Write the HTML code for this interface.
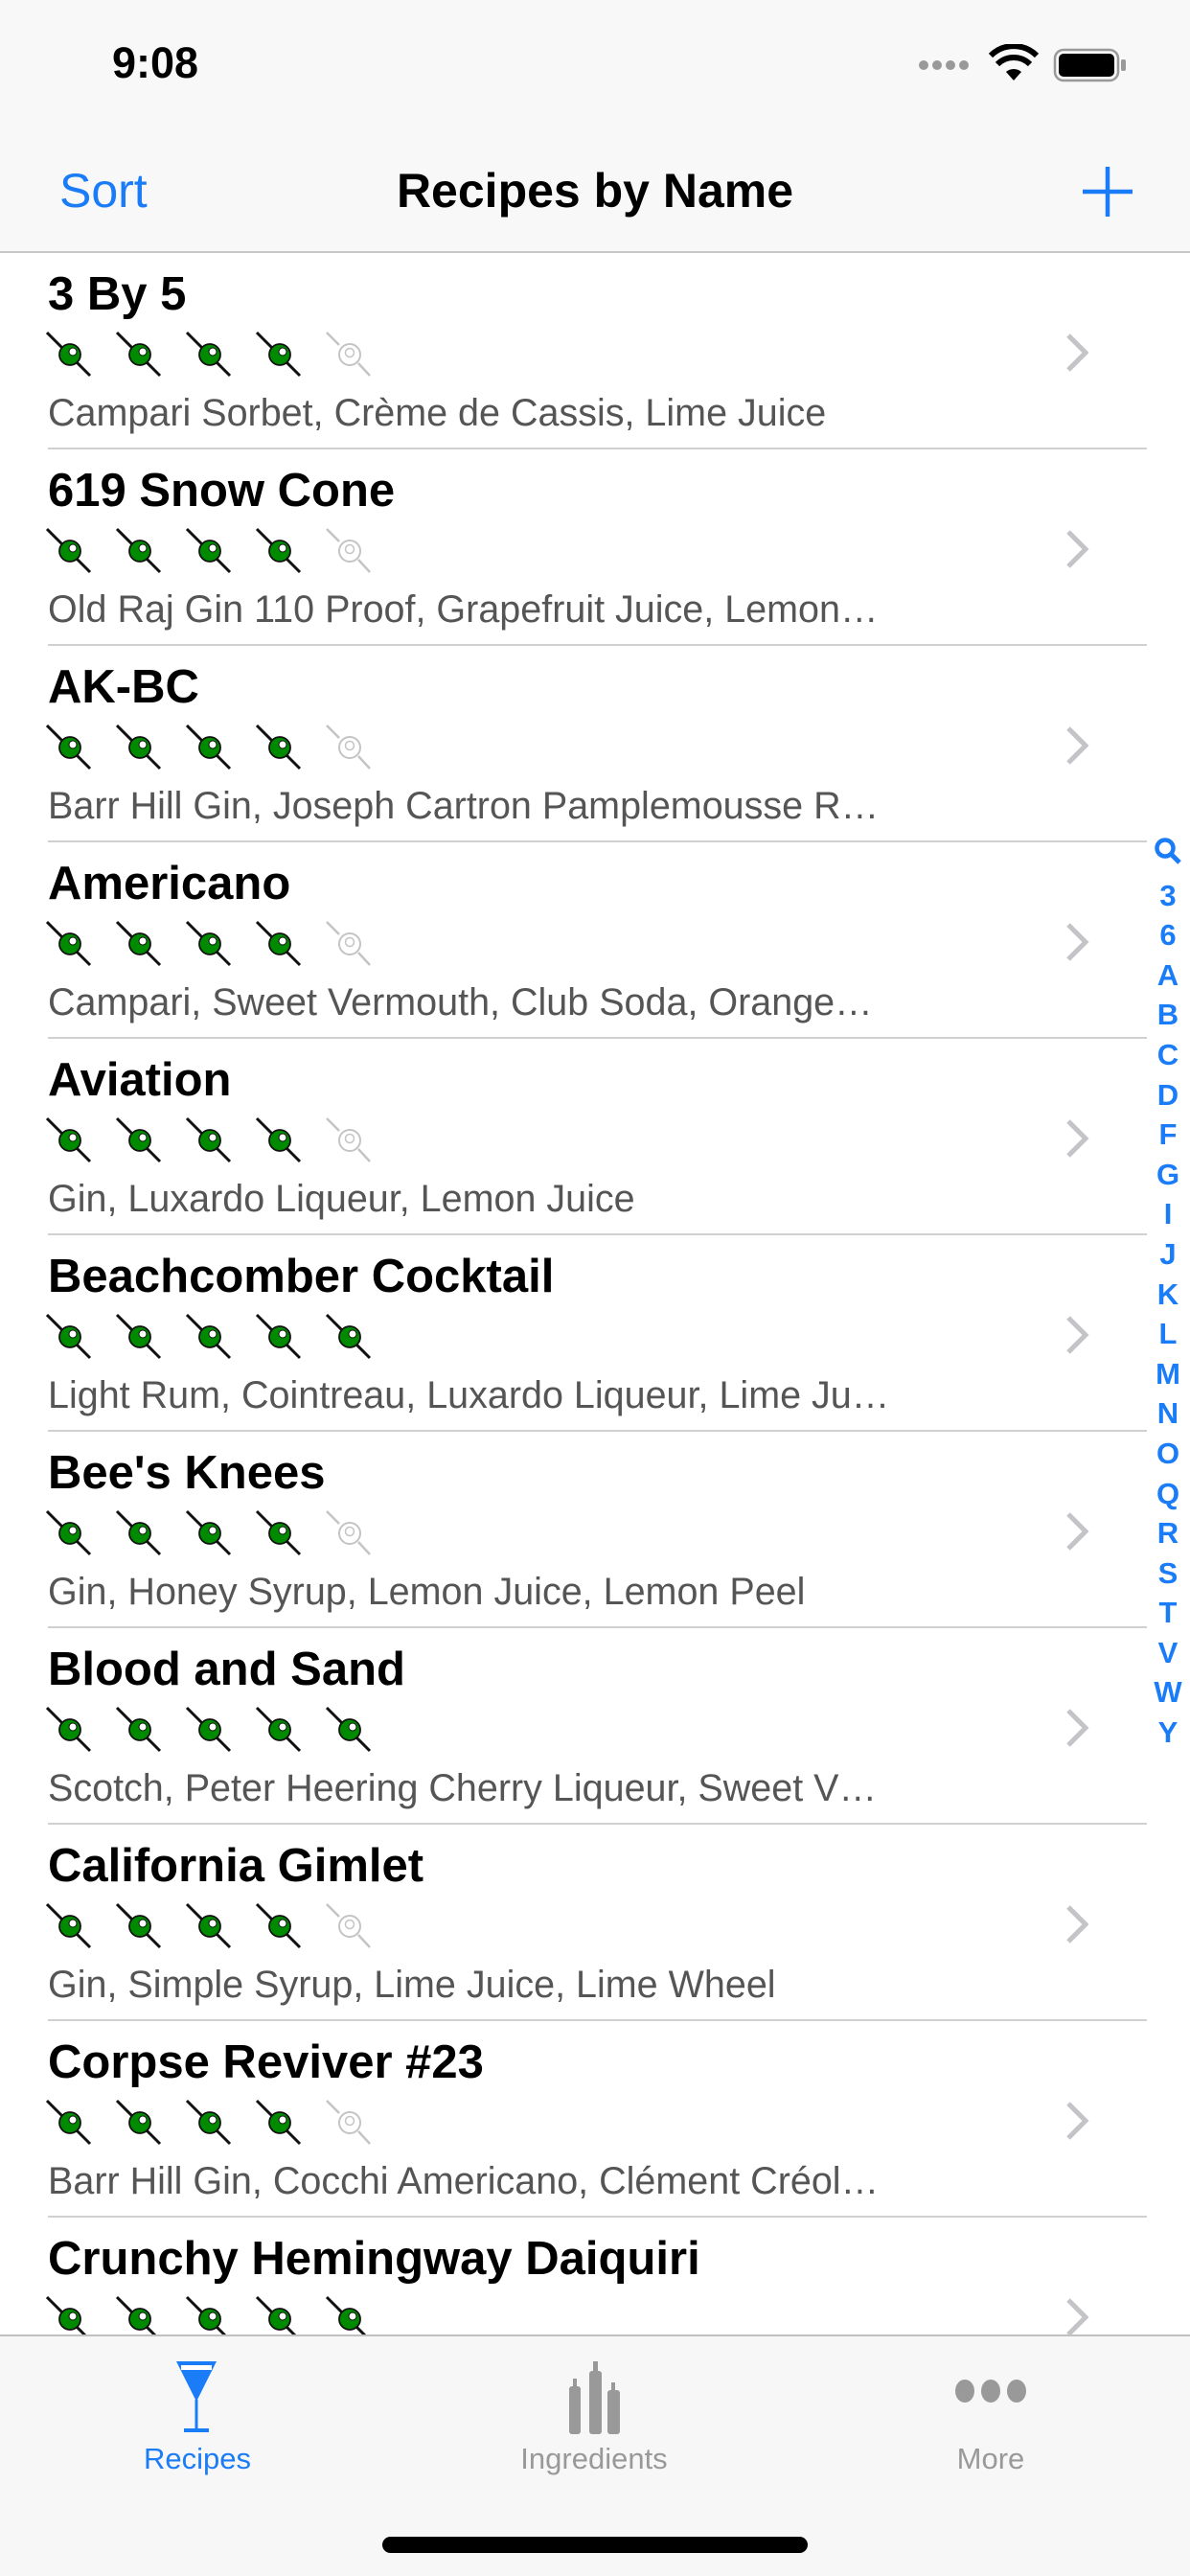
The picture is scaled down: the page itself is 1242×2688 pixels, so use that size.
<!DOCTYPE html>
<html><head><meta charset="utf-8"><style>
*{margin:0;padding:0;box-sizing:border-box}
body{width:1242px;height:2688px;position:relative;background:#fff;font-family:"Liberation Sans",Arial,sans-serif;overflow:hidden}
.abs{position:absolute}
.top{left:0;top:0;width:1242px;height:264px;background:#f8f8f8;border-bottom:2px solid #c8c8c8}
.row{position:absolute;left:0;width:1242px;height:205px}
.t{position:absolute;left:50px;top:15px;font-size:49px;font-weight:bold;color:#000;white-space:nowrap}
.s{position:absolute;left:50px;top:145px;font-size:39.5px;color:#555;white-space:nowrap}
.ic{position:absolute;left:48px;top:80px}
.sep{position:absolute;left:50px;right:45px;bottom:0;height:2px;background:#d0d0d0}
.chev{position:absolute;left:1110px;top:82px}
.idx{position:absolute;left:1198px;width:42px;text-align:center;color:#1a7cf7;font-weight:bold;font-size:31px;line-height:41.6px;top:872px}
.tab{position:absolute;left:0;top:2436px;width:1242px;height:252px;background:#f7f7f7;border-top:2px solid #c0c0c0}
.tl{position:absolute;top:110px;font-size:31px;text-align:center;width:300px}
</style></head><body>
<svg width="0" height="0" style="position:absolute">
<defs>
<g id="g"><line x1="1" y1="3" x2="46" y2="48" stroke="#111" stroke-width="3"/><circle cx="25" cy="26" r="11" fill="#008a00" stroke="#111" stroke-width="1.8"/><circle cx="28" cy="23" r="4" fill="#fff" stroke="#111" stroke-width="1"/></g>
<g id="w"><line x1="1" y1="3" x2="14" y2="16" stroke="#c4c4c4" stroke-width="2.5"/><line x1="34" y1="35" x2="46" y2="48" stroke="#c4c4c4" stroke-width="2.5"/><circle cx="25" cy="26" r="11" fill="#fff" stroke="#c4c4c4" stroke-width="2"/><circle cx="25" cy="24" r="4.5" fill="#fff" stroke="#c4c4c4" stroke-width="1.5"/></g>
</defs></svg>
<div class="abs top"></div>
<div class="abs" style="left:117px;top:40px;font-size:45px;font-weight:bold">9:08</div>
<svg class="abs" style="left:958px;top:60px" width="60" height="16"><g fill="#999"><circle cx="6" cy="8" r="5"/><circle cx="20" cy="8" r="5"/><circle cx="34" cy="8" r="5"/><circle cx="48" cy="8" r="5"/></g></svg>
<svg class="abs" style="left:1032px;top:46px" width="52" height="40" viewBox="0 0 52 40"><path d="M26 38 L18 29 A12 12 0 0 1 34 29 Z" fill="#000"/><path d="M9 21 A24 24 0 0 1 43 21" stroke="#000" stroke-width="6" fill="none"/><path d="M2 12 A34 34 0 0 1 50 12" stroke="#000" stroke-width="6" fill="none"/></svg>
<svg class="abs" style="left:1099px;top:50px" width="78" height="36"><rect x="2" y="2" width="66" height="32" rx="9" fill="none" stroke="#999" stroke-width="2.5"/><rect x="6" y="6" width="58" height="24" rx="5" fill="#000"/><rect x="71" y="12" width="5" height="12" rx="2" fill="#999"/></svg>
<div class="abs" style="left:62px;top:170px;font-size:50px;color:#1a7cf7">Sort</div>
<div class="abs" style="left:0;width:1242px;text-align:center;top:170px;font-size:50px;font-weight:bold">Recipes by Name</div>
<svg class="abs" style="left:1128px;top:172px" width="56" height="56"><path d="M28 2V54M2 28H54" stroke="#1a7cf7" stroke-width="4.5"/></svg>

<div class="row" style="top:264px"><div class="t">3 By 5</div><svg class="ic" width="340" height="52"><use href="#g"/><use href="#g" x="73"/><use href="#g" x="146"/><use href="#g" x="219"/><use href="#w" x="292"/></svg><div class="s">Campari Sorbet, Crème de Cassis, Lime Juice</div><svg class="chev" width="30" height="44"><path d="M5 4L23 22L5 40" stroke="#c4c4c8" stroke-width="5" fill="none"/></svg><div class="sep"></div></div>
<div class="row" style="top:469px"><div class="t">619 Snow Cone</div><svg class="ic" width="340" height="52"><use href="#g"/><use href="#g" x="73"/><use href="#g" x="146"/><use href="#g" x="219"/><use href="#w" x="292"/></svg><div class="s">Old Raj Gin 110 Proof, Grapefruit Juice, Lemon…</div><svg class="chev" width="30" height="44"><path d="M5 4L23 22L5 40" stroke="#c4c4c8" stroke-width="5" fill="none"/></svg><div class="sep"></div></div>
<div class="row" style="top:674px"><div class="t">AK-BC</div><svg class="ic" width="340" height="52"><use href="#g"/><use href="#g" x="73"/><use href="#g" x="146"/><use href="#g" x="219"/><use href="#w" x="292"/></svg><div class="s">Barr Hill Gin, Joseph Cartron Pamplemousse R…</div><svg class="chev" width="30" height="44"><path d="M5 4L23 22L5 40" stroke="#c4c4c8" stroke-width="5" fill="none"/></svg><div class="sep"></div></div>
<div class="row" style="top:879px"><div class="t">Americano</div><svg class="ic" width="340" height="52"><use href="#g"/><use href="#g" x="73"/><use href="#g" x="146"/><use href="#g" x="219"/><use href="#w" x="292"/></svg><div class="s">Campari, Sweet Vermouth, Club Soda, Orange…</div><svg class="chev" width="30" height="44"><path d="M5 4L23 22L5 40" stroke="#c4c4c8" stroke-width="5" fill="none"/></svg><div class="sep"></div></div>
<div class="row" style="top:1084px"><div class="t">Aviation</div><svg class="ic" width="340" height="52"><use href="#g"/><use href="#g" x="73"/><use href="#g" x="146"/><use href="#g" x="219"/><use href="#w" x="292"/></svg><div class="s">Gin, Luxardo Liqueur, Lemon Juice</div><svg class="chev" width="30" height="44"><path d="M5 4L23 22L5 40" stroke="#c4c4c8" stroke-width="5" fill="none"/></svg><div class="sep"></div></div>
<div class="row" style="top:1289px"><div class="t">Beachcomber Cocktail</div><svg class="ic" width="340" height="52"><use href="#g"/><use href="#g" x="73"/><use href="#g" x="146"/><use href="#g" x="219"/><use href="#g" x="292"/></svg><div class="s">Light Rum, Cointreau, Luxardo Liqueur, Lime Ju…</div><svg class="chev" width="30" height="44"><path d="M5 4L23 22L5 40" stroke="#c4c4c8" stroke-width="5" fill="none"/></svg><div class="sep"></div></div>
<div class="row" style="top:1494px"><div class="t">Bee's Knees</div><svg class="ic" width="340" height="52"><use href="#g"/><use href="#g" x="73"/><use href="#g" x="146"/><use href="#g" x="219"/><use href="#w" x="292"/></svg><div class="s">Gin, Honey Syrup, Lemon Juice, Lemon Peel</div><svg class="chev" width="30" height="44"><path d="M5 4L23 22L5 40" stroke="#c4c4c8" stroke-width="5" fill="none"/></svg><div class="sep"></div></div>
<div class="row" style="top:1699px"><div class="t">Blood and Sand</div><svg class="ic" width="340" height="52"><use href="#g"/><use href="#g" x="73"/><use href="#g" x="146"/><use href="#g" x="219"/><use href="#g" x="292"/></svg><div class="s">Scotch, Peter Heering Cherry Liqueur, Sweet V…</div><svg class="chev" width="30" height="44"><path d="M5 4L23 22L5 40" stroke="#c4c4c8" stroke-width="5" fill="none"/></svg><div class="sep"></div></div>
<div class="row" style="top:1904px"><div class="t">California Gimlet</div><svg class="ic" width="340" height="52"><use href="#g"/><use href="#g" x="73"/><use href="#g" x="146"/><use href="#g" x="219"/><use href="#w" x="292"/></svg><div class="s">Gin, Simple Syrup, Lime Juice, Lime Wheel</div><svg class="chev" width="30" height="44"><path d="M5 4L23 22L5 40" stroke="#c4c4c8" stroke-width="5" fill="none"/></svg><div class="sep"></div></div>
<div class="row" style="top:2109px"><div class="t">Corpse Reviver #23</div><svg class="ic" width="340" height="52"><use href="#g"/><use href="#g" x="73"/><use href="#g" x="146"/><use href="#g" x="219"/><use href="#w" x="292"/></svg><div class="s">Barr Hill Gin, Cocchi Americano, Clément Créol…</div><svg class="chev" width="30" height="44"><path d="M5 4L23 22L5 40" stroke="#c4c4c8" stroke-width="5" fill="none"/></svg><div class="sep"></div></div>
<div class="row" style="top:2314px"><div class="t">Crunchy Hemingway Daiquiri</div><svg class="ic" width="340" height="52"><use href="#g"/><use href="#g" x="73"/><use href="#g" x="146"/><use href="#g" x="219"/><use href="#g" x="292"/></svg><svg class="chev" width="30" height="44"><path d="M5 4L23 22L5 40" stroke="#c4c4c8" stroke-width="5" fill="none"/></svg></div>

<div class="idx"><div><svg width="30" height="30" viewBox="0 0 30 30"><circle cx="12" cy="12" r="8.5" stroke="#1a7cf7" stroke-width="4.5" fill="none"/><path d="M18 18L27 27" stroke="#1a7cf7" stroke-width="5"/></svg></div><div>3</div><div>6</div><div>A</div><div>B</div><div>C</div><div>D</div><div>F</div><div>G</div><div>I</div><div>J</div><div>K</div><div>L</div><div>M</div><div>N</div><div>O</div><div>Q</div><div>R</div><div>S</div><div>T</div><div>V</div><div>W</div><div>Y</div></div>

<div class="tab">
<svg class="abs" style="left:180px;top:22px" width="50" height="80" viewBox="0 0 50 80"><path d="M4 4H46L25 46Z" fill="#1a7cf7"/><rect x="9" y="8" width="32" height="5" fill="#fff"/><rect x="23.5" y="44" width="3" height="32" fill="#1a7cf7"/><rect x="12" y="74" width="26" height="4" fill="#1a7cf7"/></svg>
<div class="tl" style="left:56px;color:#1a7cf7">Recipes</div>
<svg class="abs" style="left:590px;top:22px" width="62" height="82" viewBox="0 0 62 82"><g fill="#999"><rect x="8" y="22" width="4" height="10"/><rect x="4" y="30" width="12" height="50" rx="3"/><rect x="29" y="4" width="5" height="14"/><rect x="25" y="14" width="13" height="66" rx="3"/><rect x="48" y="26" width="4" height="10"/><rect x="44" y="34" width="13" height="46" rx="3"/></g></svg>
<div class="tl" style="left:470px;color:#999">Ingredients</div>
<svg class="abs" style="left:996px;top:42px" width="76" height="30"><g fill="#999"><ellipse cx="11" cy="15" rx="10" ry="12"/><ellipse cx="38" cy="15" rx="10" ry="12"/><ellipse cx="65" cy="15" rx="10" ry="12"/></g></svg>
<div class="tl" style="left:884px;color:#999">More</div>
<div class="abs" style="left:399px;top:209px;width:444px;height:17px;border-radius:9px;background:#000"></div>
</div>
</body></html>
